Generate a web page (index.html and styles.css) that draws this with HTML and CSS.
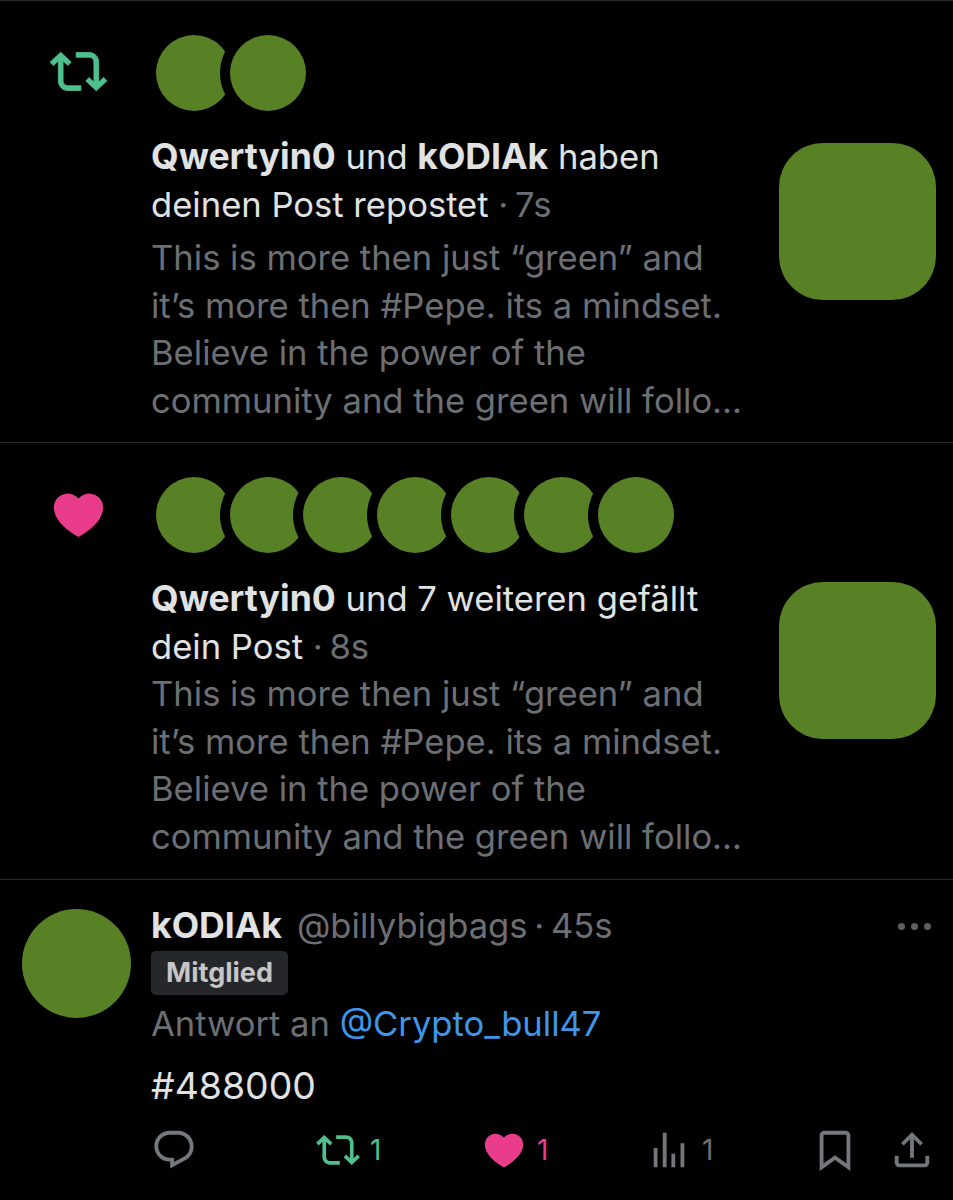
FILE: index.html
```html
<!DOCTYPE html>
<html lang="de">
<head>
<meta charset="utf-8">
<title>Mitteilungen</title>
<link rel="stylesheet" href="styles.css">
</head>
<body>
<main class="feed">
  <section class="note note-repost">
    <div class="note-icon">
      <svg class="icon-repost-lg" viewBox="0 0 24 24"><path d="M4.5 3.88l4.432 4.14-1.364 1.46L5.5 7.55V16c0 1.1.896 2 2 2H13v2H7.5c-2.209 0-4-1.79-4-4V7.55L1.432 9.48.068 8.02 4.5 3.88zM16.5 6H11V4h5.5c2.209 0 4 1.79 4 4v8.45l2.068-1.93 1.364 1.46-4.432 4.14-4.432-4.14 1.364-1.46 2.068 1.93V8c0-1.1-.896-2-2-2z"/></svg>
    </div>
    <div class="note-main">
      <div class="faces">
        <span class="face"></span><span class="face"></span>
      </div>
      <div class="note-body">
        <div class="note-text">
          <p class="headline"><b>Qwertyin0</b> und <b>kODIAk</b> haben deinen Post repostet <span class="muted">· 7s</span></p>
          <p class="snippet snippet-gap">This is more then just “green” and it’s more then #Pepe. its a mindset. Believe in the power of the community and the green will follo...</p>
        </div>
        <div class="thumb"></div>
      </div>
    </div>
  </section>

  <section class="note note-like">
    <div class="note-icon">
      <svg class="icon-heart-lg" viewBox="0 0 24 24" preserveAspectRatio="none"><path d="M20.884 13.19c-1.351 2.48-4.001 5.12-8.379 7.67l-.503.3-.504-.3c-4.379-2.55-7.029-5.19-8.382-7.67-1.36-2.5-1.41-4.86-.514-6.67.887-1.79 2.647-2.91 4.601-3.01 1.651-.09 3.368.56 4.798 2.01 1.429-1.45 3.146-2.1 4.796-2.01 1.954.1 3.714 1.22 4.601 3.01.896 1.81.846 4.17-.514 6.67z"/></svg>
    </div>
    <div class="note-main">
      <div class="faces">
        <span class="face"></span><span class="face"></span><span class="face"></span><span class="face"></span><span class="face"></span><span class="face"></span><span class="face"></span>
      </div>
      <div class="note-body">
        <div class="note-text">
          <p class="headline"><b>Qwertyin0</b> und 7 weiteren gefällt dein Post <span class="muted">· 8s</span></p>
          <p class="snippet">This is more then just “green” and it’s more then #Pepe. its a mindset. Believe in the power of the community and the green will follo...</p>
        </div>
        <div class="thumb"></div>
      </div>
    </div>
  </section>

  <article class="reply">
    <div class="reply-avatar"></div>
    <div class="reply-main">
      <div class="reply-head">
        <b class="reply-name">kODIAk</b>
        <span class="muted">@billybigbags · 45s</span>
        <span class="more"><i></i><i></i><i></i></span>
      </div>
      <div class="badge">Mitglied</div>
      <p class="reply-to">Antwort an <a class="mention">@Crypto_bull47</a></p>
      <p class="reply-text">#488000</p>
      <div class="actions">
        <span class="action act-reply">
          <svg class="icon grey" viewBox="0 0 24 24"><path d="M1.751 10c0-4.42 3.584-8 8.005-8h4.366c4.49 0 8.129 3.64 8.129 8.13 0 2.96-1.607 5.68-4.196 7.11l-8.054 4.46v-3.69h-.067c-4.49.1-8.183-3.51-8.183-8.01zm8.005-6c-3.317 0-6.005 2.69-6.005 6 0 3.37 2.77 6.08 6.138 6.01l.351-.01h1.761v2.3l5.087-2.81c1.951-1.08 3.163-3.13 3.163-5.36 0-3.39-2.744-6.13-6.129-6.13H9.756z"/></svg>
        </span>
        <span class="action act-repost">
          <svg class="icon icon-sm" viewBox="0 0 24 24"><path d="M4.5 3.88l4.432 4.14-1.364 1.46L5.5 7.55V16c0 1.1.896 2 2 2H13v2H7.5c-2.209 0-4-1.79-4-4V7.55L1.432 9.48.068 8.02 4.5 3.88zM16.5 6H11V4h5.5c2.209 0 4 1.79 4 4v8.45l2.068-1.93 1.364 1.46-4.432 4.14-4.432-4.14 1.364-1.46 2.068 1.93V8c0-1.1-.896-2-2-2z"/></svg>
          <span class="count">1</span>
        </span>
        <span class="action act-like">
          <svg class="icon" viewBox="0 0 24 24"><path d="M20.884 13.19c-1.351 2.48-4.001 5.12-8.379 7.67l-.503.3-.504-.3c-4.379-2.55-7.029-5.19-8.382-7.67-1.36-2.5-1.41-4.86-.514-6.67.887-1.79 2.647-2.91 4.601-3.01 1.651-.09 3.368.56 4.798 2.01 1.429-1.45 3.146-2.1 4.796-2.01 1.954.1 3.714 1.22 4.601 3.01.896 1.81.846 4.17-.514 6.67z"/></svg>
          <span class="count">1</span>
        </span>
        <span class="action act-views">
          <svg class="icon grey" viewBox="0 0 24 24"><path d="M8.75 21V3h2v18h-2zM18 21V8.5h2V21h-2zM4 21l.004-10h2L6 21H4zm9.248 0v-7h2v7h-2z"/></svg>
          <span class="count">1</span>
        </span>
        <span class="action-end">
          <svg class="icon grey" viewBox="0 0 24 24"><path d="M4 4.5C4 3.12 5.119 2 6.5 2h11C18.881 2 20 3.12 20 4.5v18.44l-8-5.71-8 5.71V4.5zM6.5 4c-.276 0-.5.22-.5.5v14.56l6-4.29 6 4.29V4.5c0-.28-.224-.5-.5-.5h-11z"/></svg>
          <svg class="icon grey" viewBox="0 0 24 24"><path d="M12 2.59l5.7 5.7-1.41 1.42L13 6.41V16h-2V6.41l-3.3 3.3-1.41-1.42L12 2.59zM21 15l-.02 3.51c0 1.38-1.12 2.49-2.5 2.49H5.5C4.11 21 3 19.88 3 18.5V15h2v3.5c0 .28.22.5.5.5h12.98c.28 0 .5-.22.5-.5L19 15h2z"/></svg>
        </span>
      </div>
    </div>
  </article>
</main>
</body>
</html>
```
FILE: styles.css
```css
* { box-sizing: border-box; }

html, body {
  margin: 0;
  background: #000;
}

body {
  font-family: Inter, "Liberation Sans", sans-serif;
  font-size: 34.6px;
  line-height: 47.5px;
  color: #e0e2e3;
}

p { margin: 0; }

b {
  font-size: 35.6px;
  font-weight: 700;
}

.muted {
  color: #6c6f73;
  word-spacing: -3px;
}

.feed {
  width: 953px;
  height: 1200px;
  overflow: hidden;
  border-top: 1px solid #2a2c2e;
}

/* Notification rows */
.note {
  display: flex;
  border-bottom: 1px solid #2a2c2e;
}

.note-repost { height: 442px; padding-top: 34px; }
.note-like { height: 437px; padding-top: 34px; }

.note-icon {
  width: 151px;
  flex: none;
  padding-left: 50px;
}

.icon-repost-lg {
  display: block;
  width: 57px;
  height: 57px;
  margin-top: 8px;
  fill: #4fbf8e;
  stroke: #4fbf8e;
  stroke-width: 0.35;
}

.icon-heart-lg {
  display: block;
  width: 59px;
  height: 59px;
  margin: 8px 0 0 -1px;
  fill: #e93d8b;
}

.note-main { flex: 1; min-width: 0; }

.faces {
  display: flex;
  padding-left: 5px;
}

.face {
  width: 76px;
  height: 76px;
  flex: none;
  border-radius: 50%;
  background: #588024;
  box-shadow: 0 0 0 10px #000;
}

.face + .face {
  margin-left: -2.33px;
  position: relative;
}

.note-body {
  display: flex;
  justify-content: space-between;
  padding-right: 17px;
  margin-top: 22px;
}

.note-repost .thumb { margin-top: 10px; }
.note-like .thumb { margin-top: 7px; }

.note-text { width: 600px; flex: none; }

.snippet { color: #6c6f73; }
.snippet-gap { margin-top: 6px; }

.thumb {
  width: 157px;
  height: 157px;
  flex: none;
  border-radius: 44px;
  background: #588024;
}

/* Reply row */
.reply {
  display: flex;
  padding: 29px 17px 0 22px;
}

.reply-avatar {
  width: 109px;
  height: 109px;
  flex: none;
  border-radius: 50%;
  background: #588024;
}

.reply-main {
  flex: 1;
  min-width: 0;
  margin-left: 20px;
}

.reply-head {
  display: flex;
  align-items: center;
  gap: 15px;
  height: 34px;
}

.more {
  display: flex;
  gap: 6px;
  margin-left: auto;
  margin-right: 5px;
}

.more i {
  width: 7px;
  height: 7px;
  border-radius: 50%;
  background: #5c5f62;
}

.badge {
  width: 137px;
  height: 44px;
  margin-top: 8px;
  border-radius: 5px;
  background: #25272a;
  color: #c4c6c8;
  font-size: 27px;
  font-weight: 700;
  line-height: 44px;
  text-align: center;
}

.reply-to {
  margin-top: 5px;
  color: #6c6f73;
}

.mention { color: #3f96e8; }

.reply-text {
  margin-top: 14px;
  font-size: 37.4px;
}

.actions {
  display: flex;
  align-items: center;
  margin-top: 18px;
  height: 46px;
}

.action {
  display: flex;
  align-items: center;
  gap: 10px;
}

.act-reply { width: 165px; }
.act-repost { width: 165px; color: #4fbf8e; }
.act-like { width: 165px; color: #e93d8b; }
.act-views { color: #6c6f73; }

.icon {
  display: block;
  width: 46px;
  height: 46px;
  flex: none;
  fill: currentColor;
}

.icon-sm {
  width: 44px;
  height: 44px;
}

.grey { color: #74777b; }

.count {
  font-size: 28px;
  line-height: 46px;
}

.action-end {
  display: flex;
  gap: 31px;
  margin-left: auto;
  margin-right: 1px;
}
```
